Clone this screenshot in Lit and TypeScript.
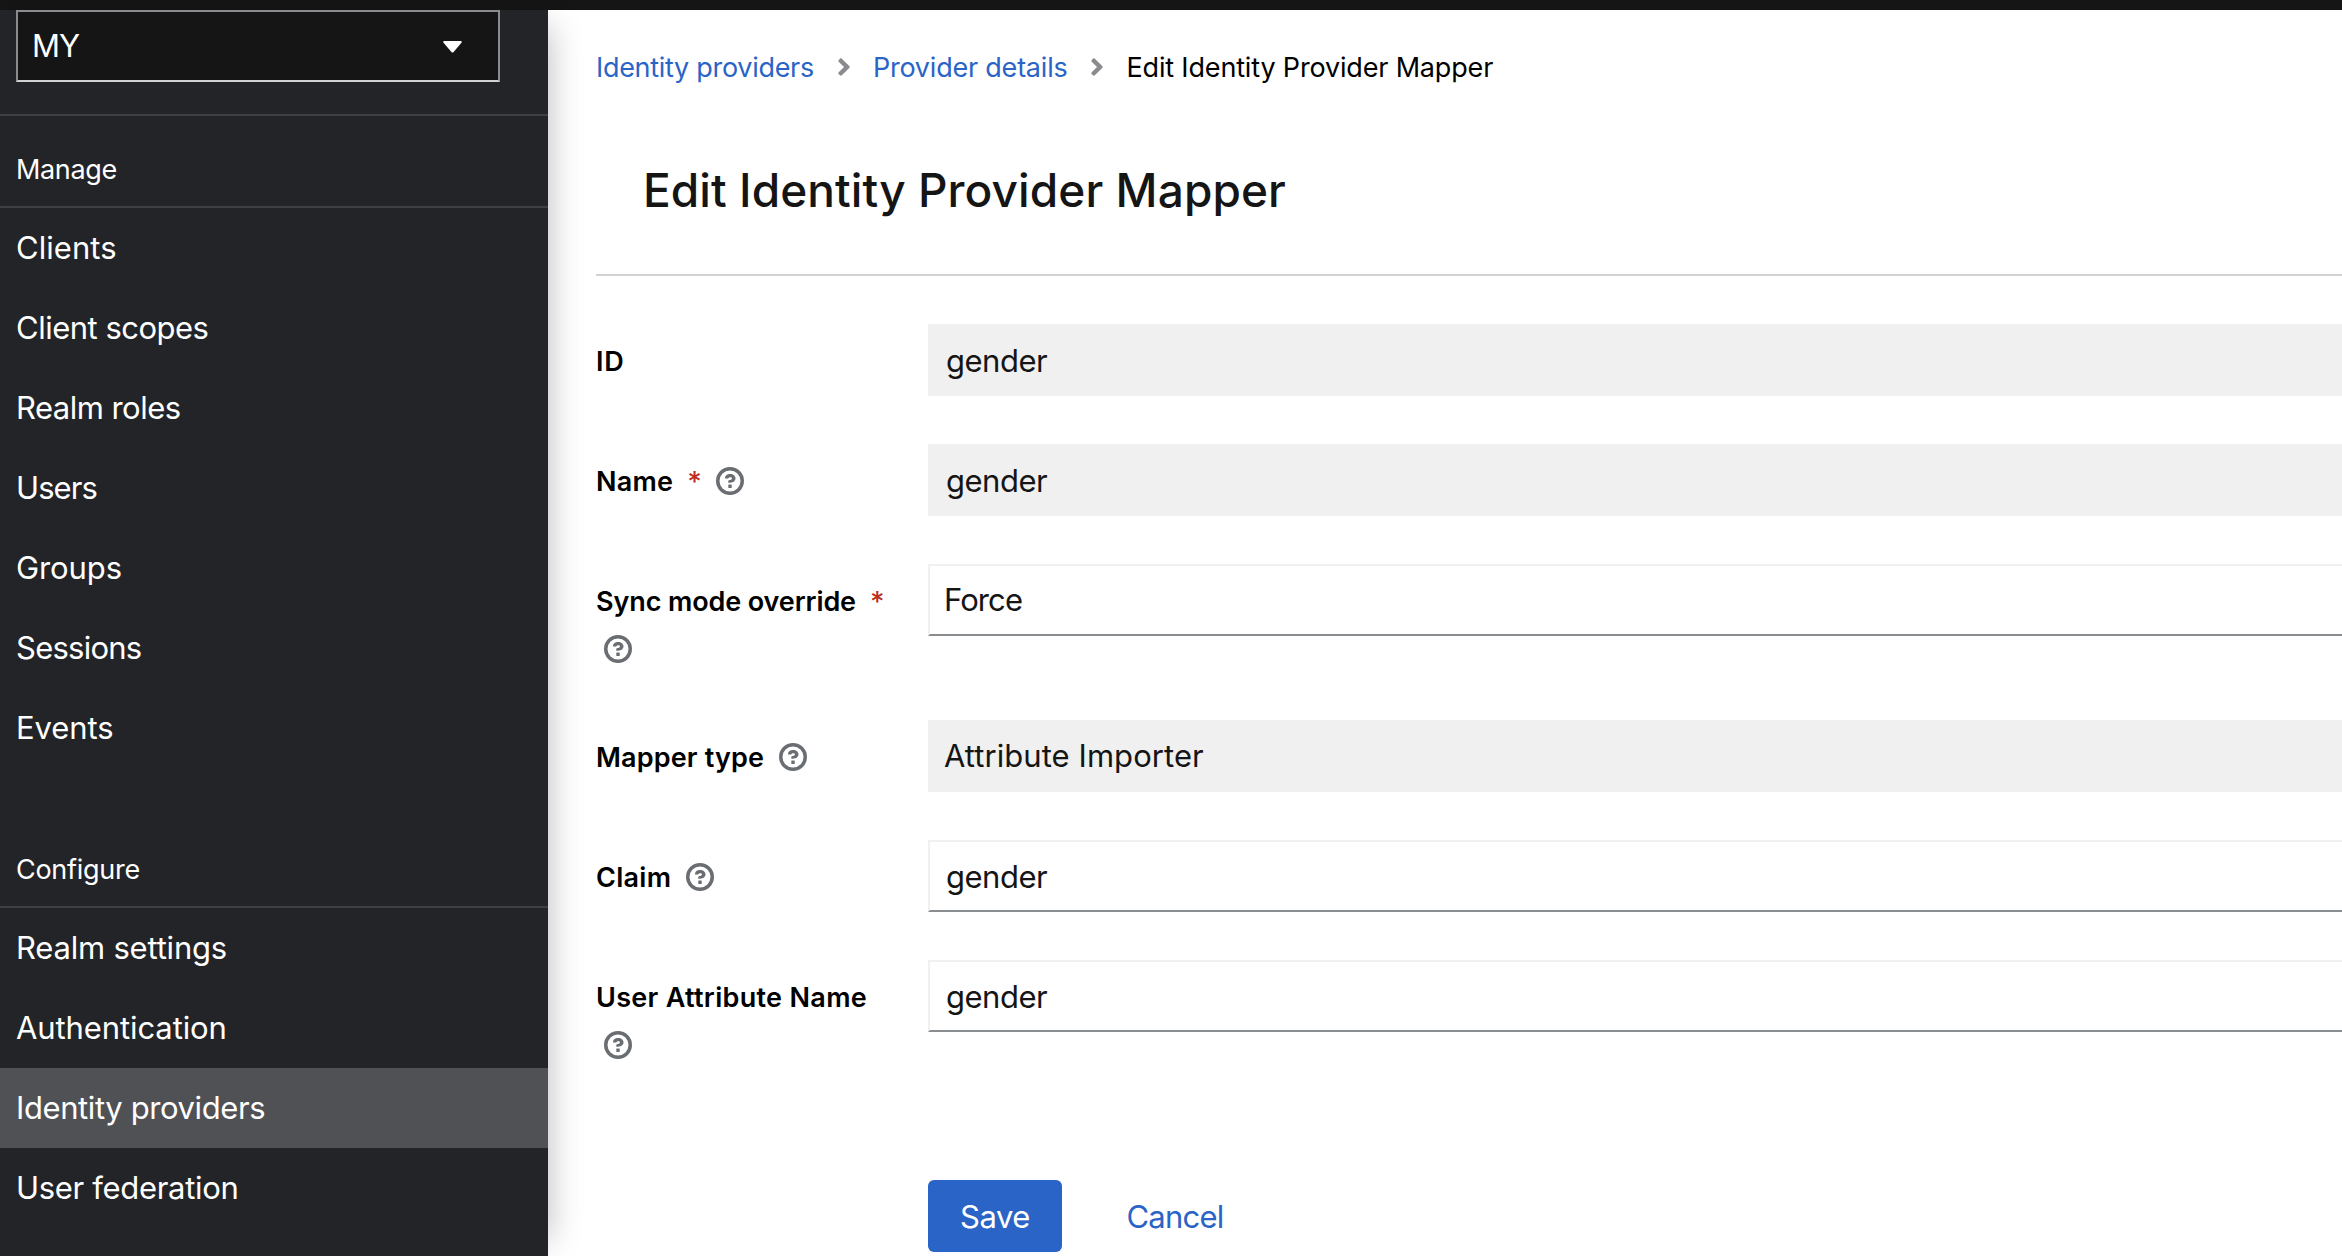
import { LitElement, html, css, svg, nothing } from "lit";
import { classMap } from "lit/directives/class-map.js";

interface Txt {
  text: string;
  /** letter spacing in px */
  ls: number;
}

interface Field extends Txt {
  required?: boolean;
  help?: boolean;
  value: Txt;
  kind: "input" | "select";
  disabled?: boolean;
}

const MANAGE: Txt[] = [
  { text: "Clients", ls: 0.05 },
  { text: "Client scopes", ls: -0.5 },
  { text: "Realm roles", ls: -0.53 },
  { text: "Users", ls: -0.94 },
  { text: "Groups", ls: -0.1 },
  { text: "Sessions", ls: -0.75 },
  { text: "Events", ls: -0.08 },
];

const CONFIGURE: Txt[] = [
  { text: "Realm settings", ls: -0.2 },
  { text: "Authentication", ls: -0.1 },
  { text: "Identity providers", ls: -0.4 },
  { text: "User federation", ls: -0.32 },
];

const GENDER: Txt = { text: "gender", ls: -0.49 };

const FIELDS: Field[] = [
  { text: "ID", ls: 0.8, value: GENDER, kind: "input", disabled: true },
  { text: "Name", ls: 0.23, required: true, help: true, value: GENDER, kind: "input", disabled: true },
  { text: "Sync mode override", ls: -0.11, required: true, help: true, value: { text: "Force", ls: -0.91 }, kind: "select" },
  { text: "Mapper type", ls: 0.16, help: true, value: { text: "Attribute Importer", ls: 0.06 }, kind: "select", disabled: true },
  { text: "Claim", ls: 0.3, help: true, value: GENDER, kind: "input" },
  { text: "User Attribute Name", ls: 0.31, help: true, value: GENDER, kind: "input" },
];

const spaced = (t: Txt) => html`<span style="letter-spacing:${t.ls}px">${t.text}</span>`;

const chevron = html`<svg class="chevron" viewBox="0 0 256 512" aria-hidden="true">
  ${svg`<path fill="currentColor" d="M224.3 273l-136 136c-9.4 9.4-24.6 9.4-33.9 0l-22.6-22.6c-9.4-9.4-9.4-24.6 0-33.9l96.4-96.4-96.4-96.4c-9.4-9.4-9.4-24.6 0-33.9L54.3 103c9.4-9.4 24.6-9.4 33.9 0l136 136c9.5 9.4 9.5 24.6.1 34z"/>`}
</svg>`;

const helpIcon = html`<svg class="help" viewBox="0 0 1024 1024" aria-hidden="true">
  <circle cx="512" cy="512" r="448" fill="none" stroke="currentColor" stroke-width="128" />
  <path fill="currentColor" d="M521.3,576 C627.5,576 713.7,502 713.7,413.7 C713.7,325.4 627.6,253.6 521.3,253.6 C366,253.6 334.5,337.7 329.2,407.2 C329.2,414.3 335.2,416 343.5,416 L445,416 C450.5,416 458,415.5 460.8,406.5 C460.8,362.6 582.9,357.1 582.9,413.6 C582.9,441.9 556.2,470.9 521.3,473 C486.4,475.1 447.3,479.8 447.3,521.7 L447.3,553.8 C447.3,570.8 456.1,576 472,576 Z M575.3,751.3 L575.3,655.3 C575.3,651.9 572.6,640 560,640 L465,640 C452.7,640 449.7,648.4 449.7,655.3 L449.7,751.3 C449.7,762.5 453,768 466,768 L560,768 C569.6,768 575.3,761 575.3,751.3 Z" />
</svg>`;

class AppRoot extends LitElement {
  static styles = css`
    :host {
      display: flex;
      flex-direction: column;
      width: 100%;
      height: 100vh;
      overflow: hidden;
      background: #fff;
      color: #151515;
      font-family: Inter, "Liberation Sans", sans-serif;
      font-size: 31px;
      white-space: nowrap;
    }
    * { box-sizing: border-box; }
    .masthead { height: 10px; flex: none; background: #151515; }
    .body { display: flex; flex: 1; min-height: 0; }

    .sidebar {
      width: 548px;
      flex: none;
      background: #232428;
      color: #fff;
      box-shadow: 16px 0 32px -16px rgba(3, 3, 3, 0.28);
    }
    .realm { height: 106px; padding: 0 48px 0 16px; border-bottom: 2px solid #3d3f43; }
    .realm-select {
      display: flex;
      align-items: center;
      justify-content: space-between;
      height: 72px;
      padding: 0 36px 2px 14px;
      background: #151515;
      border: 2px solid #8a8b8f;
      border-bottom-color: #d2d2d2;
    }
    .caret { width: 19px; height: 12px; display: block; margin-top: 3px; }
    .section-title {
      display: flex;
      align-items: center;
      height: 92px;
      padding: 16px 16px 0;
      font-size: 27px;
      border-bottom: 2px solid #3d3f43;
    }
    .section + .section { margin-top: 48px; }
    .item { display: flex; align-items: center; height: 80px; padding: 0 0 2px 16px; }
    .item.current { background: #505155; }

    main { flex: 1; min-width: 0; padding-left: 48px; }
    .crumbs { display: flex; align-items: center; height: 114px; font-size: 27px; color: #000; }
    .link { color: #2a64c6; }
    .chevron { width: 14px; height: 28px; margin: 0 22px 0 23px; color: #8a8b8f; flex: none; }
    h1 {
      margin: 0;
      height: 152px;
      padding: 36px 0 0 47px;
      line-height: 60px;
      font-size: 46px;
      font-weight: 500;
      letter-spacing: 0.08px;
      border-bottom: 2px solid #d2d2d2;
    }
    form { display: flex; flex-direction: column; gap: 48px; padding-top: 48px; }
    .field { display: grid; grid-template-columns: 332px 1fr; align-items: start; }
    .label {
      padding: 14px 24px 0 0;
      margin-bottom: -2px;
      line-height: 48px;
      font-size: 27px;
      font-weight: 600;
      color: #000;
      display: flex;
      flex-wrap: wrap;
    }
    .required { margin-left: 14px; width: 14px; color: #bd2d20; font-size: 28px; font-weight: 500; }
    .help { width: 28px; height: 28px; margin: 9px 0 11px 15px; color: #6a6e73; flex: none; }
    .wrapped { flex-basis: 100%; display: flex; }
    .wrapped .help { margin-left: 8px; }
    .control {
      display: flex;
      align-items: center;
      height: 72px;
      padding: 0 16px;
      border: 2px solid #f0f0f0;
      border-right: 0;
      border-bottom-color: #8a8d90;
    }
    .control.select { padding: 0 14px 1px; }
    .control.disabled { background: #f0f0f0; border-bottom-color: #f0f0f0; }
    .actions { display: flex; gap: 32px; padding: 64px 0 0 332px; }
    .btn { display: flex; align-items: center; justify-content: center; width: 134px; height: 72px; border-radius: 6px; }
    .primary { background: #2a64c6; color: #fff; }
    .plain { width: 162px; color: #2a64c6; }
  `;

  private section(title: Txt, items: Txt[], current = "") {
    return html`<div class="section">
      <div class="section-title">${spaced(title)}</div>
      ${items.map((i) => html`<div class=${classMap({ item: true, current: i.text === current })}>${spaced(i)}</div>`)}
    </div>`;
  }

  private field(f: Field) {
    const wraps = f.text.length > 12;
    return html`<div class="field">
      <div class="label">
        ${spaced(f)}${f.required ? html`<span class="required">*</span>` : nothing}
        ${f.help ? (wraps ? html`<span class="wrapped">${helpIcon}</span>` : helpIcon) : nothing}
      </div>
      <div class=${classMap({ control: true, select: f.kind === "select", disabled: !!f.disabled })}>${spaced(f.value)}</div>
    </div>`;
  }

  render() {
    return html`
      <div class="masthead"></div>
      <div class="body">
        <nav class="sidebar">
          <div class="realm">
            <div class="realm-select">
              ${spaced({ text: "MY", ls: -1.1 })}
              <svg class="caret" viewBox="0 0 19 12"><path fill="#fff" d="M1 0H18Q19.4 .6 18.4 1.8L10.4 11.2Q9.5 12 8.6 11.2L.6 1.8Q-.4 .6 1 0Z" /></svg>
            </div>
          </div>
          ${this.section({ text: "Manage", ls: -0.36 }, MANAGE)}
          ${this.section({ text: "Configure", ls: -0.27 }, CONFIGURE, "Identity providers")}
        </nav>
        <main>
          <div class="crumbs">
            <span class="link">${spaced({ text: "Identity providers", ls: -0.3 })}</span>${chevron}
            <span class="link">${spaced({ text: "Provider details", ls: -0.22 })}</span>${chevron}
            ${spaced({ text: "Edit Identity Provider Mapper", ls: -0.17 })}
          </div>
          <h1>Edit Identity Provider Mapper</h1>
          <form>${FIELDS.map((f) => this.field(f))}
            <div class="actions">
              <div class="btn primary">${spaced({ text: "Save", ls: -0.45 })}</div>
              <div class="btn plain">${spaced({ text: "Cancel", ls: -0.75 })}</div>
            </div>
          </form>
        </main>
      </div>`;
  }
}
customElements.define("app-root", AppRoot);
